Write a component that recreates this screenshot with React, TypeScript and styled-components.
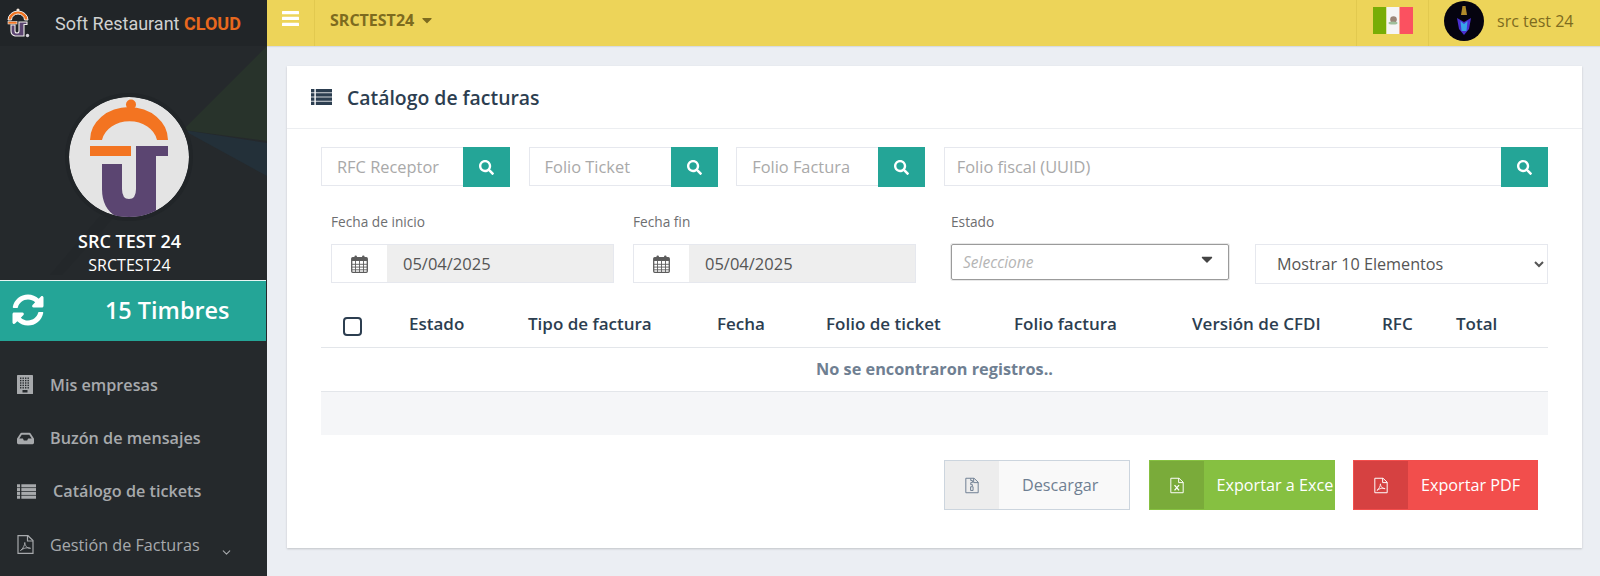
import React from 'react'
import styled, { createGlobalStyle } from 'styled-components'
import { FaSearch, FaSyncAlt, FaInbox, FaCaretDown } from 'react-icons/fa'
import { ChevronDown } from 'lucide-react'

const colors = {
  side: '#25292c',
  sideTop: '#212528',
  teal: '#24a597',
  yellow: '#edd459',
  yellowText: '#7d6b1f',
  page: '#ebeef3',
  navy: '#2c3e50',
  border: '#e6e8ee',
  muted: '#a7a9ac',
}

const GlobalStyle = createGlobalStyle`
  html, body { margin: 0; padding: 0; height: 100%; overflow: hidden; }
  body { font-family: 'Open Sans', 'Noto Sans', sans-serif; background: ${colors.page}; }
  * { box-sizing: border-box; }
`

const Layout = styled.div`
  display: flex;
  width: 1600px;
  height: 576px;
  overflow: hidden;
`
const Sidebar = styled.aside`
  position: relative;
  width: 267px;
  flex: none;
  background: ${colors.side};
  overflow: hidden;
`
const SideDecor = styled.svg`
  position: absolute;
  left: 0;
  top: 0;
  width: 267px;
  height: 290px;
`
const Brand = styled.div`
  position: relative;
  height: 46px;
  background: ${colors.sideTop};
  display: flex;
  align-items: center;
  padding-left: 7px;
  gap: 25px;
`
const BrandText = styled.span`
  font-family: Roboto, 'Liberation Sans', sans-serif;
  font-size: 18px;
  color: #d0d1d1;
  white-space: nowrap;
  b { color: #e8681e; font-weight: 700; }
`
const Profile = styled.div`
  position: relative;
  height: 234px;
  padding: 51px 8px 0 0;
  display: flex;
  flex-direction: column;
  align-items: center;
  color: #fff;
`
const ProfileName = styled.div`
  margin-top: 12px;
  font-size: 18px;
  line-height: 24px;
  font-weight: 600;
`
const ProfileSub = styled.div`
  font-size: 16px;
  line-height: 24px;
`
const Stamps = styled.div`
  position: relative;
  height: 61px;
  margin-right: 1px;
  background: ${colors.teal};
  border-top: 1px solid #e8f5f3;
  display: flex;
  align-items: center;
  padding: 0 0 3px 12px;
  color: #fff;
  font-size: 23.4px;
  font-weight: 600;
  span { margin-left: 61px; }
`
const Menu = styled.nav`
  position: relative;
  padding-top: 17px;
`
const MenuItem = styled.div<{ $gap: number }>`
  height: 53.4px;
  display: flex;
  align-items: center;
  padding-left: 17px;
  gap: ${p => p.$gap}px;
  color: ${colors.muted};
  font-size: 16.2px;
  font-weight: 600;
  white-space: nowrap;
  svg { flex: none; }
`
const MenuLight = styled.span`
  font-weight: 400;
`
const MenuChevron = styled(ChevronDown)`
  margin: 15px 0 0 4px;
`

const Main = styled.main`
  flex: 1;
  min-width: 0;
  display: flex;
  flex-direction: column;
`
const Topbar = styled.header`
  height: 46px;
  background: ${colors.yellow};
  display: flex;
  align-items: stretch;
  color: ${colors.yellowText};
  box-shadow: 0 1px 1px rgba(0, 0, 0, 0.08);
`
const MenuToggle = styled.div`
  width: 48px;
  border-right: 1px solid #e2c94f;
  display: flex;
  justify-content: center;
  padding-top: 11px;
`
const Company = styled.div`
  padding: 0 0 6px 15px;
  display: flex;
  align-items: center;
  gap: 5px;
  font-size: 16px;
  font-weight: 700;
  flex: 1;
`
const FlagCell = styled.div`
  width: 73px;
  border-left: 1px solid #e2c94f;
  border-right: 1px solid #e2c94f;
  display: flex;
  align-items: center;
  justify-content: center;
  padding-bottom: 5px;
`
const UserCell = styled.div`
  width: 171px;
  display: flex;
  align-items: center;
  gap: 13px;
  padding: 0 0 4px 15px;
  font-size: 16px;
`
const Content = styled.div`
  padding: 20px 18px 0 20px;
`
const Card = styled.section`
  background: #fff;
  height: 482px;
  box-shadow: 0 1px 2px rgba(0, 0, 0, 0.18);
`
const CardHead = styled.div`
  height: 63px;
  border-bottom: 1px solid #eceef1;
  display: flex;
  align-items: center;
  gap: 15px;
  padding: 0 0 0 24px;
  color: ${colors.navy};
  font-size: 19.4px;
  font-weight: 600;
`
const CardBody = styled.div`
  padding: 18px 34px 0;
`
const SearchRow = styled.div`
  display: flex;
  gap: 18.6px;
`
const SearchGroup = styled.div<{ $wide?: boolean }>`
  display: flex;
  height: 40px;
  width: ${p => (p.$wide ? 'auto' : '189px')};
  flex: ${p => (p.$wide ? 1 : 'none')};
`
const SearchInput = styled.input<{ $pad: number }>`
  flex: 1;
  min-width: 0;
  height: 39px;
  border: 1px solid ${colors.border};
  border-right: 0;
  outline: 0;
  padding: 0 ${p => p.$pad}px;
  font: 400 16.4px 'Open Sans', sans-serif;
  color: #555;
  &::placeholder { color: #a9a9a9; opacity: 1; }
`
const SearchButton = styled.button`
  width: 47px;
  flex: none;
  border: 0;
  padding: 0;
  background: ${colors.teal};
  color: #fff;
  display: flex;
  align-items: center;
  justify-content: center;
`
const FilterRow = styled.div`
  display: grid;
  grid-template-columns: 302px 318px 304px 293px;
  margin-left: 10px;
  padding-top: 25px;
  align-items: start;
`
const Field = styled.div<{ $width: number }>`
  width: ${p => p.$width}px;
`
const FieldLabel = styled.label`
  display: block;
  font-size: 13.7px;
  line-height: 20px;
  color: #6d6e70;
  margin-bottom: 12px;
`
const DateGroup = styled.div`
  display: flex;
  height: 39px;
  border: 1px solid ${colors.border};
`
const DateAddon = styled.div`
  width: 55px;
  flex: none;
  display: flex;
  align-items: center;
  justify-content: center;
  color: #5c5c5c;
`
const DateInput = styled.input`
  flex: 1;
  min-width: 0;
  border: 0;
  outline: 0;
  background: #eeeeee;
  padding: 0 16px;
  font: 400 16.5px 'Open Sans', sans-serif;
  color: #555;
`
const EstadoSelect = styled.div`
  height: 36px;
  margin-top: 2px;
  border: 1px solid #9b9b9b;
  border-radius: 2px;
  box-shadow: 0 0 0 1px #e8e8e8;
  display: flex;
  align-items: center;
  justify-content: space-between;
  padding: 0 12px 0 11px;
  font-size: 15.5px;
  font-style: italic;
  color: #b5b5b5;
  svg { margin-top: -6px; }
`
const PageSize = styled.select`
  height: 40px;
  width: 293px;
  margin-top: 32px;
  border: 1px solid ${colors.border};
  background: #fff;
  padding: 0 0 0 17px;
  font: 400 16.2px 'Open Sans', sans-serif;
  color: #555;
  outline: 0;
`
const DataTable = styled.div`
  margin-top: 18px;
`
const HeadRow = styled.div`
  display: grid;
  grid-template-columns: 88px 119px 189px 109px 188px 178px 190px 74px 92px;
  height: 46px;
  align-items: center;
  border-bottom: 1px solid #e3e6ea;
  color: ${colors.navy};
  font-size: 17px;
  font-weight: 600;
  padding-bottom: 2px;
  white-space: nowrap;
`
const CheckCell = styled.div`
  padding: 6px 0 0 22px;
  display: flex;
`
const CheckBox = styled.input.attrs({ type: 'checkbox' })`
  appearance: none;
  width: 19px;
  height: 19px;
  margin: 0;
  border: 2px solid ${colors.navy};
  border-radius: 4px;
  background: #fff;
`
const EmptyRow = styled.div`
  height: 43.5px;
  display: flex;
  align-items: center;
  justify-content: center;
  border-bottom: 1px solid #e3e6ea;
  color: #6f7f92;
  font-size: 16.3px;
  font-weight: 700;
`
const TableFoot = styled.div`
  height: 43.5px;
  background: #f5f6f8;
`
const Actions = styled.div`
  display: flex;
  justify-content: flex-end;
  gap: 18.5px;
  margin-top: 25px;
  padding-right: 10px;
`
const ActionButton = styled.button<{ $bg: string; $line: string; $fg: string; $width: number }>`
  width: ${p => p.$width}px;
  height: 50px;
  padding: 0;
  border: 1px solid ${p => p.$line};
  background: ${p => p.$bg};
  color: ${p => p.$fg};
  font: 400 16.2px 'Open Sans', sans-serif;
  display: flex;
  align-items: stretch;
  overflow: hidden;
  white-space: nowrap;
`
const ActionIcon = styled.span<{ $bg: string }>`
  width: 54px;
  flex: none;
  background: ${p => p.$bg};
  display: flex;
  align-items: center;
  justify-content: center;
`
const ActionLabel = styled.span<{ $pad: number }>`
  display: flex;
  align-items: center;
  padding-left: ${p => p.$pad}px;
`

function RestaurantLogo({ className }: { className?: string }) {
  return (
    <svg className={className} viewBox="0 0 120 120">
      <circle cx="60" cy="60" r="60" fill="#e4e4e4" />
      <circle cx="62" cy="7.5" r="5" fill="#f37421" />
      <path d="M21 43A39 33 0 0 1 99 43H88A28 23 0 0 0 33 43Z" fill="#f37421" />
      <rect x="21" y="49" width="41" height="10" fill="#f37421" />
      <path d="M33 67H53V92Q53 102 60 102Q67 102 67 92V49H99V59H87V120H48Q33 112 33 92Z" fill="#5b4571" />
    </svg>
  )
}
const AvatarLogo = styled(RestaurantLogo)`
  width: 120px;
  height: 120px;
  margin-left: -2px;
  border-radius: 50%;
  box-shadow: 0 0 0 4px #212528;
`

function SmallLogo() {
  return (
    <svg width="23" height="30" viewBox="0 0 23 30">
      <circle cx="11" cy="2" r="1.6" fill="#f3e4d8" />
      <path d="M1 12A10 9 0 0 1 21 12H17.5A6.5 6 0 0 0 4.500 12Z" fill="#f37421" stroke="#f1efec" strokeWidth="1" />
      <rect x="1" y="13.500" width="9" height="2.500" fill="#f37421" stroke="#f1efec" strokeWidth=".6" />
      <path d="M4 17H8V23Q8 25 10 25Q12 25 12 23V14H20V16.500H17V28H8Q4 27 4 23Z" fill="#5b4571" stroke="#f1efec" strokeWidth="1.100" />
      <circle cx="20.500" cy="27.500" r="1.700" fill="#d8d4dc" />
    </svg>
  )
}

function MexicoFlag() {
  return (
    <svg width="40" height="27" viewBox="0 0 40 27">
      <rect width="13.400" height="27" fill="#78ad06" />
      <rect x="13.400" width="13.200" height="27" fill="#f5f5f5" />
      <rect x="26.600" width="13.400" height="27" fill="#fb5160" />
      <circle cx="20.500" cy="12.500" r="3.300" fill="#9a8577" />
      <ellipse cx="20" cy="16" rx="4.500" ry="1.500" fill="#9fbf9b" />
    </svg>
  )
}

function UserPicture() {
  return (
    <svg width="40" height="40" viewBox="0 0 40 40">
      <circle cx="20" cy="20" r="20" fill="#05030f" />
      <path d="M18.500 5h3l1.500 9h-6z" fill="#b08a2a" />
      <path d="M13 17l7 4 7-4-2 11-5 6-5-6z" fill="#4a2fd0" />
      <path d="M16.500 20l3.500 3 3.500-3-1 10h-5z" fill="#38a4ea" />
    </svg>
  )
}

function BarsIcon() {
  return (
    <svg width="17" height="15" viewBox="0 0 17 15" fill="#fff">
      <rect width="17" height="3.300" rx=".5" />
      <rect y="5.800" width="17" height="3.300" rx=".5" />
      <rect y="11.700" width="17" height="3.300" rx=".5" />
    </svg>
  )
}

function ListIcon({ width, height }: { width: number; height: number }) {
  const rows = [0, 4.200, 8.400, 12.600]
  return (
    <svg width={width} height={height} viewBox="0 0 21 16" fill="currentColor">
      {rows.map(y => (
        <g key={y}>
          <rect y={y} width="3.400" height="3.400" />
          <rect x="4.800" y={y} width="16.200" height="3.400" />
        </g>
      ))}
    </svg>
  )
}

function CalendarIcon() {
  return (
    <svg width="17" height="18" viewBox="0 0 17 18" fill="none" stroke="currentColor">
      <rect x=".7" y="2.700" width="15.600" height="14.600" rx="1" strokeWidth="1.300" />
      <rect x="1" y="3" width="15" height="3" fill="currentColor" stroke="none" />
      <path d="M1 9.300H16M1 12.100H16M1 14.800H16M4.500 6V17M8.500 6V17M12.500 6V17" strokeWidth=".9" />
      <rect x="3.500" y=".5" width="2.400" height="4.500" rx="1" fill="currentColor" stroke="none" />
      <rect x="11.100" y=".5" width="2.400" height="4.500" rx="1" fill="currentColor" stroke="none" />
    </svg>
  )
}

function BuildingIcon() {
  const dots: React.ReactElement[] = []
  for (let r = 0; r < 5; r++) {
    for (let c = 0; c < 4; c++) {
      dots.push(<rect key={`${r}-${c}`} x={3 + c * 2.500} y={2.500 + r * 2.400} width="1.400" height="1.400" fill="#25292c" />)
    }
  }
  return (
    <svg width="16" height="19" viewBox="0 0 16 19" fill="currentColor">
      <rect width="16" height="19" rx=".6" />
      {dots}
      <rect x="5.500" y="15" width="5" height="2.500" fill="#25292c" />
    </svg>
  )
}

function FileIcon({ width, height, children }: { width: number; height: number; children: React.ReactNode }) {
  return (
    <svg width={width} height={height} viewBox="0 0 17 19" fill="none" stroke="currentColor" strokeWidth="1.200">
      <path d="M1 .7H11L16 5.500V18.300H1Z" />
      <path d="M10.500 .7V6H16" />
      {children}
    </svg>
  )
}

const PdfMark = <path d="M3.500 15.500C6 14 8 9.500 7.800 7.500C7.600 9.500 10 14 13.500 13.300C11 12 6.500 13 3.500 15.500Z" strokeWidth="1" />
const ExcelMark = <path d="M5.500 9L11 15.500M11 9L5.500 15.500" strokeWidth="1.600" />
const ZipMark = <path d="M7 1V3.500H9V6H7V8.500H9V10M6.800 11H9.800V15.500H6.800Z" strokeWidth="1.200" />

const searches = ['RFC Receptor', 'Folio Ticket', 'Folio Factura']

const columns = ['Estado', 'Tipo de factura', 'Fecha', 'Folio de ticket', 'Folio factura', 'Versión de CFDI', 'RFC', 'Total']

export default function App() {
  return (
    <>
      <GlobalStyle />
      <Layout>
        <Sidebar>
          <SideDecor viewBox="0 0 267 290">
            <polygon points="183,130 267,46 267,141" fill="#28332b" />
            <polygon points="183,130 267,143 267,176" fill="#233039" />
            <polygon points="100,216 50,275 62,275 115,216" fill="#23272a" />
          </SideDecor>
          <Brand>
            <SmallLogo />
            <BrandText>Soft Restaurant <b>CLOUD</b></BrandText>
          </Brand>
          <Profile>
            <AvatarLogo />
            <ProfileName>SRC TEST 24</ProfileName>
            <ProfileSub>SRCTEST24</ProfileSub>
          </Profile>
          <Stamps>
            <FaSyncAlt size={32} />
            <span>15 Timbres</span>
          </Stamps>
          <Menu>
            <MenuItem $gap={17}><BuildingIcon />Mis empresas</MenuItem>
            <MenuItem $gap={16}><FaInbox size={17} />Buzón de mensajes</MenuItem>
            <MenuItem $gap={17}><ListIcon width={19} height={15} />Catálogo de tickets</MenuItem>
            <MenuItem $gap={16}>
              <FileIcon width={17} height={19}>{PdfMark}</FileIcon>
              <MenuLight>Gestión de Facturas</MenuLight>
              <MenuChevron size={13} />
            </MenuItem>
          </Menu>
        </Sidebar>
        <Main>
          <Topbar>
            <MenuToggle><BarsIcon /></MenuToggle>
            <Company>SRCTEST24 <FaCaretDown size={16} /></Company>
            <FlagCell><MexicoFlag /></FlagCell>
            <UserCell><UserPicture /><span>src test 24</span></UserCell>
          </Topbar>
          <Content>
            <Card>
              <CardHead>
                <ListIcon width={21} height={16} />
                Catálogo de facturas
              </CardHead>
              <CardBody>
                <SearchRow>
                  {searches.map(s => (
                    <SearchGroup key={s}>
                      <SearchInput $pad={15} placeholder={s} />
                      <SearchButton aria-label="Buscar"><FaSearch size={15} /></SearchButton>
                    </SearchGroup>
                  ))}
                  <SearchGroup $wide>
                    <SearchInput $pad={12} placeholder="Folio fiscal (UUID)" />
                    <SearchButton aria-label="Buscar"><FaSearch size={15} /></SearchButton>
                  </SearchGroup>
                </SearchRow>
                <FilterRow>
                  <Field $width={283}>
                    <FieldLabel>Fecha de inicio</FieldLabel>
                    <DateGroup>
                      <DateAddon><CalendarIcon /></DateAddon>
                      <DateInput readOnly value="05/04/2025" />
                    </DateGroup>
                  </Field>
                  <Field $width={283}>
                    <FieldLabel>Fecha fin</FieldLabel>
                    <DateGroup>
                      <DateAddon><CalendarIcon /></DateAddon>
                      <DateInput readOnly value="05/04/2025" />
                    </DateGroup>
                  </Field>
                  <Field $width={278}>
                    <FieldLabel>Estado</FieldLabel>
                    <EstadoSelect>
                      Seleccione
                      <FaCaretDown size={18} color="#444" />
                    </EstadoSelect>
                  </Field>
                  <PageSize defaultValue="10">
                    <option value="10">Mostrar 10 Elementos</option>
                  </PageSize>
                </FilterRow>
                <DataTable>
                  <HeadRow>
                    <CheckCell><CheckBox /></CheckCell>
                    {columns.map(c => <div key={c}>{c}</div>)}
                  </HeadRow>
                  <EmptyRow>No se encontraron registros..</EmptyRow>
                  <TableFoot />
                </DataTable>
                <Actions>
                  <ActionButton $width={186} $bg="#f9f9f9" $line="#ccd5de" $fg="#6f7f92">
                    <ActionIcon $bg="#ededed"><FileIcon width={14} height={17}>{ZipMark}</FileIcon></ActionIcon>
                    <ActionLabel $pad={23}>Descargar</ActionLabel>
                  </ActionButton>
                  <ActionButton $width={186} $bg="#86c041" $line="#86c041" $fg="#fff">
                    <ActionIcon $bg="#7aab3a"><FileIcon width={14} height={17}>{ExcelMark}</FileIcon></ActionIcon>
                    <ActionLabel $pad={13}>Exportar a Excel</ActionLabel>
                  </ActionButton>
                  <ActionButton $width={185} $bg="#f24e4c" $line="#f24e4c" $fg="#fff">
                    <ActionIcon $bg="#d64141"><FileIcon width={14} height={17}>{PdfMark}</FileIcon></ActionIcon>
                    <ActionLabel $pad={13}>Exportar PDF</ActionLabel>
                  </ActionButton>
                </Actions>
              </CardBody>
            </Card>
          </Content>
        </Main>
      </Layout>
    </>
  )
}
